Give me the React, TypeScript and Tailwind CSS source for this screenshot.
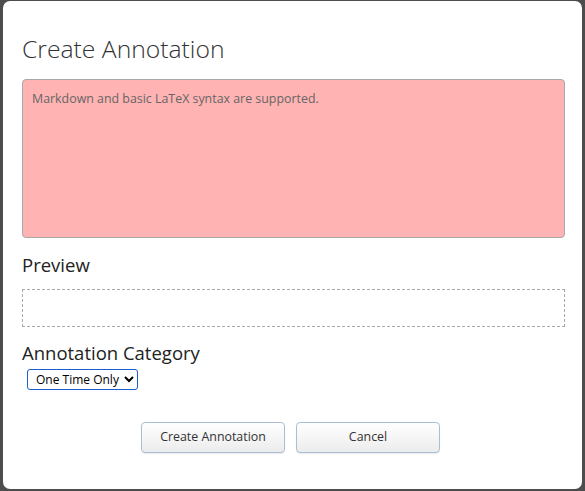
export default function App() {
  return (
    <div className="h-[491px] w-[585px] overflow-hidden bg-[#4d4d4d] pt-[1px] pl-[3px] font-['Open_Sans',sans-serif]">
      <div className="h-[488px] w-[579px] rounded-[7px] bg-white pl-[19px] pr-[17px] pt-[30px]">
        <h1 className="text-[24.7px] font-light leading-[36px] text-[#333]">Create Annotation</h1>

        <textarea
          className="mt-[12px] block h-[159px] w-[543px] resize-none rounded-[4px] border border-[#a8a8a8] bg-[#ffb3b3] px-[9px] py-[10px] text-[12.4px] leading-[18px] text-[#555] placeholder:text-[#666] outline-none"
          placeholder="Markdown and basic LaTeX syntax are supported."
        />

        <h2 className="mt-[13px] text-[18.5px] leading-[27px] text-[#222]">Preview</h2>
        <div className="mt-[11px] h-[38px] w-[543px] border border-dashed border-[#aaa]" />

        <h2 className="mt-[12px] text-[18.5px] leading-[27px] text-[#222]">Annotation Category</h2>
        <select className="ml-[5px] mt-[2px] h-[21px] w-[111px] rounded-[3px] border-[1.5px] border-[#1a5fd0] bg-white pl-[4px] pr-0 text-[12px] text-black outline-none">
          <option>One Time Only</option>
        </select>

        <div className="mt-[32px] flex gap-[11px] pl-[119px]">
          <button className="h-[31px] w-[144px] rounded-[4px] border border-[#a9bdd3] bg-gradient-to-b from-white to-[#ececec] text-[12.4px] text-[#333] shadow-[0_1px_1px_rgba(0,0,0,0.08)]">
            Create Annotation
          </button>
          <button className="h-[31px] w-[144px] rounded-[4px] border border-[#a9bdd3] bg-gradient-to-b from-white to-[#ececec] text-[12.4px] text-[#333] shadow-[0_1px_1px_rgba(0,0,0,0.08)]">
            Cancel
          </button>
        </div>
      </div>
    </div>
  )
}
